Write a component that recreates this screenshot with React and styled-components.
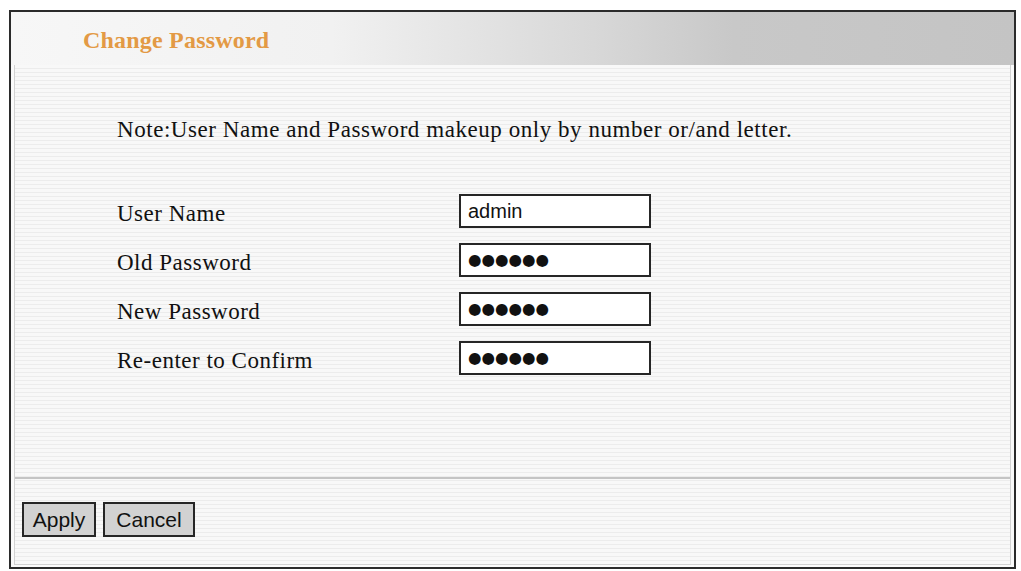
import React from "react"
import styled, { createGlobalStyle } from "styled-components"

const GlobalStyle = createGlobalStyle`
  html, body {
    margin: 0;
    background: #ffffff;
  }
`

const Frame = styled.div`
  box-sizing: border-box;
  margin: 10px 0 0 9px;
  width: 1007px;
  height: 559px;
  border: 2px solid #2b2b2b;
  display: flex;
  flex-direction: column;
  background: #fafafa;
`

const Header = styled.div`
  height: 53px;
  flex: none;
  display: flex;
  align-items: center;
  padding: 3px 0 0 72px;
  box-sizing: border-box;
  background: linear-gradient(
    to right,
    #f7f7f7 0%,
    #f1f1f1 32%,
    #d8d8d8 58%,
    #c8c8c8 72%,
    #c4c4c4 100%
  );
`

const Title = styled.h1`
  margin: 0;
  font-family: "Liberation Serif", serif;
  font-size: 24px;
  font-weight: bold;
  letter-spacing: 0.2px;
  color: #e39a45;
`

const Body = styled.div`
  flex: 1;
  display: flex;
  flex-direction: column;
  margin: 0 3px 2px 3px;
  border: 1px solid #d2d2d2;
  border-top: none;
  background: repeating-linear-gradient(
    to bottom,
    #f8f8f8 0px,
    #f8f8f8 3px,
    #ececec 3px,
    #ececec 4px
  );
`

const Content = styled.div`
  flex: 1;
  padding: 52px 0 0 102px;
  font-family: "Liberation Serif", serif;
  color: #111;
`

const Note = styled.p`
  margin: 0 0 51px 0;
  font-size: 23px;
  letter-spacing: 0.55px;
`

const Form = styled.div`
  display: grid;
  grid-template-columns: 342px 192px;
  grid-auto-rows: 49px;
  align-items: start;
`

const Label = styled.label`
  font-size: 23px;
  letter-spacing: 0.5px;
  line-height: 34px;
  padding-top: 3px;
`

const Field = styled.input`
  box-sizing: border-box;
  width: 192px;
  height: 34px;
  margin: 0;
  padding: 0 7px;
  border: 2px solid #262626;
  background: #ffffff;
  color: #111;
  font-family: ${p => (p.$masked ? "'DejaVu Sans', sans-serif" : "'Liberation Sans', sans-serif")};
  font-size: ${p => (p.$masked ? "15.5px" : "20px")};
  outline: none;
`

const Footer = styled.div`
  flex: none;
  box-sizing: border-box;
  height: 87px;
  border-top: 2px solid #c4c4c4;
  display: flex;
  align-items: flex-start;
  gap: 7px;
  padding: 23px 0 0 7px;
`

const Button = styled.button`
  box-sizing: border-box;
  height: 35px;
  width: ${p => p.$w}px;
  padding: 0;
  border: 2px solid #262626;
  background: #d2d2d2;
  font-family: "Liberation Sans", sans-serif;
  font-size: 21px;
  color: #111;
`

const rows = [
  { label: "User Name", value: "admin" },
  { label: "Old Password", value: "●●●●●●", masked: true },
  { label: "New Password", value: "●●●●●●", masked: true },
  { label: "Re-enter to Confirm", value: "●●●●●●", masked: true },
]

export default function App() {
  return (
    <>
      <GlobalStyle />
      <Frame>
        <Header>
          <Title>Change Password</Title>
        </Header>
        <Body>
          <Content>
            <Note>Note:User Name and Password makeup only by number or/and letter.</Note>
            <Form>
              {rows.map(r => (
                <React.Fragment key={r.label}>
                  <Label>{r.label}</Label>
                  <Field readOnly value={r.value} $masked={r.masked} />
                </React.Fragment>
              ))}
            </Form>
          </Content>
          <Footer>
            <Button $w={74}>Apply</Button>
            <Button $w={92}>Cancel</Button>
          </Footer>
        </Body>
      </Frame>
    </>
  )
}
